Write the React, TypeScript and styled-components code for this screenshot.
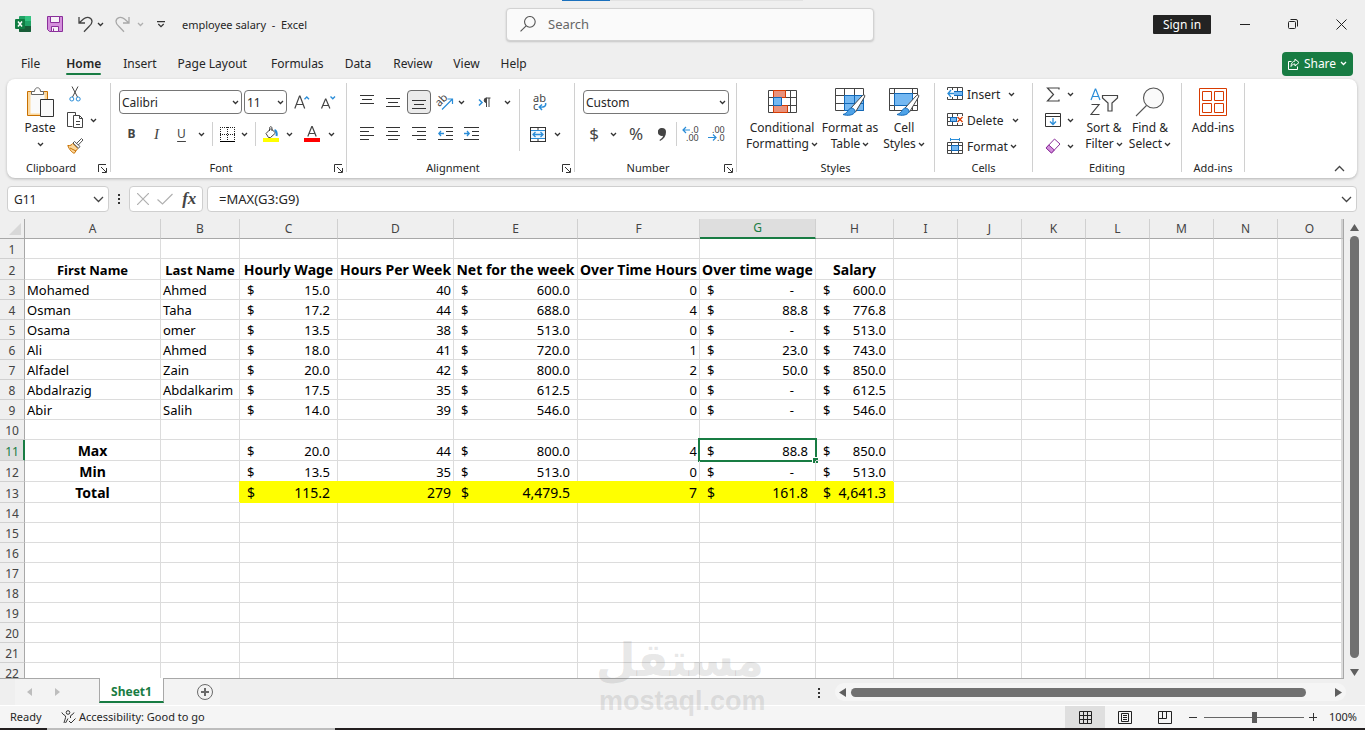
import React from 'react';
import styled, { createGlobalStyle, css } from 'styled-components';

const C = {
  bg: '#efefef',
  ink: '#262626',
  icon: '#444444',
  line: '#d0d0d0',
  grid: '#dcdcdc',
  edge: '#a8a8a8',
  selected: '#dedede',
  green: '#187c43',
  blue: '#2a8dd8',
  orange: '#d83b01',
  thumb: '#717171',
};

const Global = createGlobalStyle`
  *, *::before, *::after { box-sizing: border-box; }
  body { margin: 0; background: ${C.bg}; }
  body, button, input, select { font-family: "Noto Sans", "Open Sans", sans-serif; font-size: 12px; color: ${C.ink}; }
  button { border: 0; padding: 0; background: none; cursor: default; line-height: 16px; }
  svg { display: block; flex: none; }
`;

const Window = styled.div`
  position: relative;
  display: flex;
  flex-direction: column;
  height: 100vh;
  overflow: hidden;
  background: ${C.bg};
`;

/* ---------- title bar ---------- */
const TitleBar = styled.header`
  display: flex;
  align-items: center;
  height: 48px;
  padding-left: 15px;
`;
const TitleSide = styled.div<{ $end?: boolean }>`
  flex: 1 1 0;
  display: flex;
  align-items: center;
  justify-content: ${(p) => (p.$end ? 'flex-end' : 'flex-start')};
  white-space: nowrap;
`;
const QuickButton = styled.button<{ $w: number }>`
  display: flex;
  align-items: center;
  justify-content: center;
  width: ${(p) => p.$w}px;
  height: 24px;
`;
const DocTitle = styled.h1`
  margin: 2px 0 0 4px;
  font-size: 11px;
  font-weight: 400;
  line-height: 16px;
  white-space: pre;
`;
const SearchBox = styled.label`
  display: flex;
  align-items: center;
  gap: 12px;
  width: 368px;
  height: 33px;
  padding-left: 13px;
  border: 1px solid #d2d2d2;
  border-radius: 4px;
  background: #fafafa;
  box-shadow: 0 1px 2px rgba(0, 0, 0, 0.18);
`;
const BareInput = styled.input<{ $s?: number }>`
  flex: 1;
  min-width: 0;
  height: 20px;
  padding: 0;
  border: 0;
  outline: 0;
  background: none;
  font-size: ${(p) => p.$s ?? 12}px;
  &::placeholder { color: #666; opacity: 1; }
`;
const SignIn = styled.button`
  height: 19px;
  width: 58px;
  margin-right: 10px;
  padding-top: 1px;
  border-radius: 1px;
  background: #232323;
  color: #fff;
`;
const Accent = styled.div`
  position: absolute;
  top: 0;
  left: 562px;
  width: 241px;
  height: 1px;
  background: linear-gradient(90deg, #1a70bd 48px, #e2e2e2 48px);
`;

/* ---------- ribbon tabs ---------- */
const TabBar = styled.nav`
  display: flex;
  align-items: center;
  height: 31px;
  padding: 0 12px 0 11px;
`;
const TabLink = styled.a<{ $active?: boolean; $gap?: number }>`
  position: relative;
  margin-right: ${(p) => p.$gap ?? 1}px;
  padding: 0 10px;
  line-height: 22px;
  color: ${C.ink};
  text-decoration: none;
  ${(p) =>
    p.$active &&
    css`
      font-weight: 600;
      &::after {
        content: '';
        position: absolute;
        left: 10px;
        right: 10px;
        bottom: 0;
        height: 2px;
        border-radius: 1px;
        background: ${C.green};
      }
    `}
`;
const ShareButton = styled.button`
  display: flex;
  align-items: center;
  justify-content: center;
  gap: 4px;
  width: 71px;
  height: 24px;
  margin-left: auto;
  border-radius: 4px;
  background: ${C.green};
  color: #fff;
`;

/* ---------- ribbon ---------- */
const Ribbon = styled.section`
  display: flex;
  align-items: flex-start;
  margin: 0 8px 0 7px;
  padding: 4px 0 2px;
  border-radius: 8px;
  background: #fff;
  box-shadow: 0 1px 3px rgba(0, 0, 0, 0.25);
`;
const GroupBox = styled.div<{ $w: number }>`
  flex: none;
  width: ${(p) => p.$w}px;
`;
const GroupBody = styled.div<{ $pad?: number }>`
  display: flex;
  height: 77px;
  padding-left: ${(p) => p.$pad ?? 0}px;
`;
const GroupFoot = styled.div`
  display: flex;
  align-items: center;
  height: 16px;
  line-height: 16px;
  font-size: 11px;
`;
const GroupName = styled.span`
  flex: 1;
  text-align: center;
`;
const Launcher = styled.button`
  display: flex;
  justify-content: center;
  width: 15px;
`;
const Rule = styled.div<{ $h: number; $top?: number; $mx?: number }>`
  flex: none;
  width: 1px;
  height: ${(p) => p.$h}px;
  margin: ${(p) => p.$top ?? 0}px ${(p) => p.$mx ?? 0}px 0;
  background: ${C.line};
`;
const Stack = styled.div<{ $top?: number; $gap?: number }>`
  display: flex;
  flex-direction: column;
  gap: ${(p) => p.$gap ?? 8}px;
  padding-top: ${(p) => p.$top ?? 7}px;
`;
const Line = styled.div<{ $gap?: number; $pad?: number }>`
  display: flex;
  align-items: center;
  gap: ${(p) => p.$gap ?? 0}px;
  padding-left: ${(p) => p.$pad ?? 0}px;
`;
const Tool = styled.button<{ $w?: number; $h?: number; $on?: boolean }>`
  display: flex;
  align-items: center;
  justify-content: center;
  width: ${(p) => p.$w ?? 26}px;
  height: ${(p) => p.$h ?? 24}px;
  ${(p) =>
    p.$on &&
    css`
      width: 24px;
      margin: 0 1px;
      border: 1px solid #6a6a6a;
      border-radius: 4px;
      background: #ebebeb;
    `}
`;
const Letter = styled.span<{ $kind: 'b' | 'i' | 'u' }>`
  font-size: 12px;
  line-height: 16px;
  color: ${C.icon};
  ${(p) => p.$kind === 'b' && 'font-weight: 700;'}
  ${(p) => p.$kind === 'i' && 'font-family: "Liberation Serif", serif; font-style: italic; font-size: 15px;'}
  ${(p) => p.$kind === 'u' && 'text-decoration: underline; text-underline-offset: 3px;'}
`;
const Big = styled.button<{ $w: number }>`
  display: flex;
  flex-direction: column;
  align-items: center;
  align-self: flex-start;
  width: ${(p) => p.$w}px;
  white-space: nowrap;
`;
const BigIcon = styled.span`
  display: flex;
  align-items: center;
  height: 37px;
`;
const WithArrow = styled.span`
  display: flex;
  align-items: center;
  gap: 2px;
  height: 16px;
`;
const Row = styled.button<{ $gap?: number }>`
  display: flex;
  align-items: center;
  height: 22px;
  white-space: nowrap;
  & > span { padding-top: 2px; margin: 0 ${(p) => p.$gap ?? 2}px 0 3px; }
`;
const SelectWrap = styled.span<{ $w: number }>`
  position: relative;
  display: block;
  width: ${(p) => p.$w}px;
  height: 24px;
  & > svg { position: absolute; right: 3px; top: 10px; pointer-events: none; }
`;
const Select = styled.select`
  appearance: none;
  width: 100%;
  height: 24px;
  padding: 0 2px;
  border: 1px solid #767676;
  border-radius: 4px;
  background: #fff;
`;
const Collapse = styled.button`
  align-self: flex-end;
  margin: 0 12px 4px auto;
`;

/* ---------- formula bar ---------- */
const FormulaBar = styled.div`
  display: flex;
  align-items: center;
  height: 26px;
  margin: 8px 8px 7px 7px;
`;
const Field = styled.div<{ $w?: number }>`
  display: flex;
  align-items: center;
  ${(p) => (p.$w ? `width: ${p.$w}px;` : 'flex: 1;')}
  height: 26px;
  padding: 0 4px 0 6px;
  border: 1px solid #cfcfcf;
  border-radius: 4px;
  background: #fff;
`;
const FormulaField = styled(Field)`
  margin-left: 4px;
  padding-left: 11px;
`;
const FxMark = styled.span`
  font-family: "Liberation Serif", serif;
  font-style: italic;
  font-weight: 700;
  font-size: 17px;
  color: #444;
`;
const Dots = styled.span<{ $top?: number }>`
  display: flex;
  justify-content: center;
  width: 20px;
  padding-top: ${(p) => p.$top ?? 0}px;
`;

/* ---------- sheet ---------- */
const Work = styled.main`
  flex: 1;
  min-height: 0;
  display: flex;
`;
const SheetArea = styled.div`
  flex: 1;
  min-width: 0;
  overflow: hidden;
  border-right: 1px solid ${C.edge};
  border-bottom: 1px solid ${C.edge};
`;
const Table = styled.table`
  width: 100%;
  table-layout: fixed;
  border-collapse: separate;
  border-spacing: 0;
  background: #fff;
  font-size: 13px;
  line-height: 18px;
  color: #000;
`;
const ColHead = styled.th<{ $on?: boolean }>`
  height: 20px;
  padding: 0;
  border-right: 1px solid ${C.line};
  border-bottom: ${(p) => (p.$on ? `2px solid ${C.green}` : `1px solid ${C.edge}`)};
  background: ${(p) => (p.$on ? C.selected : C.bg)};
  font-size: 12px;
  font-weight: 400;
  color: ${(p) => (p.$on ? C.green : C.icon)};
`;
const Corner = styled(ColHead)`
  border-right-color: ${C.edge};
  & > svg { margin: 0 3px 0 auto; }
`;
const RowHead = styled.th<{ $on?: boolean; $h: number }>`
  height: ${(p) => p.$h}px;
  padding: 2px 0 0;
  border-right: 1px solid ${(p) => (p.$on ? C.green : C.edge)};
  border-bottom: 1px solid ${C.line};
  background: ${(p) => (p.$on ? C.selected : C.bg)};
  ${(p) => p.$on && `box-shadow: inset -1px 0 0 ${C.green};`}
  font-size: 12px;
  line-height: 17px;
  font-weight: 400;
  color: ${(p) => (p.$on ? C.green : C.icon)};
`;
const Cell = styled.td<{ $align?: string; $bold?: boolean; $fill?: boolean; $big?: boolean }>`
  position: relative;
  padding: ${(p) => (p.$big ? '0 2px' : '2px 2px 0')};
  border-right: 1px solid ${C.grid};
  border-bottom: 1px solid ${C.grid};
  font-size: ${(p) => (p.$big ? 14 : 13)}px;
  line-height: 17px;
  white-space: nowrap;
  text-align: ${(p) => p.$align ?? 'left'};
  font-weight: ${(p) => (p.$bold ? 700 : 400)};
  ${(p) => p.$fill && 'background: #ff0; border-color: #ff0; box-shadow: -1px -1px 0 #ff0;'}
`;
const Money = styled.span<{ $dash?: boolean }>`
  display: flex;
  justify-content: space-between;
  padding: 0 ${(p) => (p.$dash ? 19 : 5)}px 0 5px;
`;
const Cursor = styled.span`
  position: absolute;
  inset: -2px;
  border: 2px solid ${C.green};
  &::after {
    content: '';
    position: absolute;
    right: -3px;
    bottom: -3px;
    width: 5px;
    height: 5px;
    background: ${C.green};
    box-shadow: -1px -1px 0 #fff;
  }
`;
const VScroll = styled.div`
  flex: none;
  display: flex;
  flex-direction: column;
  align-items: center;
  gap: 4px;
  width: 21px;
  padding: 4px 0 2px;
`;
const VThumb = styled.div`
  flex: 1;
  width: 9px;
  margin-bottom: 6px;
  border-radius: 5px;
  background: ${C.thumb};
`;

/* ---------- sheet tabs and status ---------- */
const SheetBar = styled.div`
  display: flex;
  align-items: flex-start;
  height: 27px;
  padding-right: 19px;
  border-bottom: 1px solid #fff;
`;
const TabStrip = styled.div`
  display: flex;
  align-items: center;
  width: 205px;
  height: 26px;
  margin-left: 15px;
  background: #f3f3f3;
`;
const SheetTab = styled.button`
  align-self: flex-start;
  width: 65px;
  height: 25px;
  margin: -1px 28px 0 28px;
  padding-top: 4px;
  border: solid ${C.edge};
  border-width: 0 1px;
  border-bottom: 2px solid ${C.green};
  background: #fff;
  color: ${C.green};
  font-weight: 700;
`;
const HScroll = styled.div`
  flex: 0 0 38%;
  display: flex;
  align-items: center;
  gap: 5px;
  height: 18px;
  margin: 4px 0 0 6px;
  padding: 0 4px;
  border-radius: 9px;
  background: #f5f5f5;
`;
const HTrack = styled.div`
  flex: 1;
  height: 9px;
`;
const HThumb = styled.div`
  width: 95%;
  height: 9px;
  border-radius: 5px;
  background: ${C.thumb};
`;
const Status = styled.footer`
  display: flex;
  align-items: center;
  height: 22px;
  padding: 0 8px 0 10px;
  background: #f5f5f5;
  font-size: 11px;
  line-height: 16px;
`;
const Ready = styled.span`
  width: 51px;
`;
const Access = styled.span`
  margin-left: 3px;
`;
const Percent = styled.output`
  width: 40px;
  text-align: right;
`;
const ViewButton = styled.button<{ $on?: boolean }>`
  display: flex;
  align-items: center;
  justify-content: center;
  width: 40px;
  height: 22px;
  background: ${(p) => (p.$on ? '#dfdfdf' : 'none')};
`;
const Zoom = styled.input`
  appearance: none;
  width: 100px;
  height: 12px;
  margin: 0 5px 0 3px;
  background: linear-gradient(#666, #666) center / 100% 1px no-repeat;
  &::-webkit-slider-thumb {
    appearance: none;
    width: 5px;
    height: 11px;
    background: #5c5c5c;
  }
`;
const Taskbar = styled.div`
  flex: none;
  height: 2px;
  background: linear-gradient(90deg, #231f20 47px, #bdbdbd 47px 335px, #231f20 335px);
`;
const Spacer = styled.div`
  flex: 1;
`;
const Watermark = styled.div`
  position: absolute;
  left: 599px;
  bottom: 14px;
  width: 165px;
  text-align: center;
  color: rgba(110, 110, 110, 0.17);
  font-weight: 700;
  pointer-events: none;
  white-space: nowrap;
`;
const WmArabic = styled.div`
  font-family: "DejaVu Sans", sans-serif;
  font-size: 46px;
  line-height: 52px;
`;
const WmLatin = styled.div`
  font-family: "Liberation Sans", sans-serif;
  font-size: 27px;
  line-height: 30px;
`;

/* ---------- icons ---------- */
type IconProps = { w: number; h: number; children: React.ReactNode; stroke?: string; sw?: number };
const Svg = ({ w, h, children, stroke = C.icon, sw = 1 }: IconProps) => (
  <svg width={w} height={h} viewBox={`0 0 ${w} ${h}`} fill="none" stroke={stroke} strokeWidth={sw} aria-hidden="true">
    {children}
  </svg>
);
const Chev = ({ c = '#333' }: { c?: string }) => (
  <Svg w={7} h={5} stroke={c} sw={1.3}><path d="M1 1l2.5 2.5L6 1" /></Svg>
);
const WideChev = ({ up }: { up?: boolean }) => (
  <Svg w={11} h={7} sw={1.3}><path d={up ? 'M1 6l4.5-4.5L10 6' : 'M1 1l4.5 4.5L10 1'} /></Svg>
);
const ExcelLogo = () => (
  <Svg w={17} h={16} stroke="none">
    <rect x="4" y="0" width="12" height="16" rx="1" fill="#21a366" />
    <path d="M10 0h5a1 1 0 011 1v4h-6z" fill="#33c481" />
    <path d="M4 5h6v5H4z" fill="#107c41" />
    <path d="M10 5h6v5h-6z" fill="#21a366" />
    <path d="M4 10h12v5a1 1 0 01-1 1H5a1 1 0 01-1-1z" fill="#185c37" />
    <rect x="0" y="3" width="10" height="10" rx="1" fill="#107c41" />
    <path d="M3 5.500l4 5M7 5.500l-4 5" stroke="#fff" strokeWidth="1.5" />
  </Svg>
);
const Save = () => (
  <Svg w={16} h={16} stroke="#8a2f9a">
    <path d="M.5.5h15v15h-13l-2-2z" fill="#d48fdc" />
    <path d="M3.500.5h9v6h-9z" fill="#f7f2f8" />
    <path d="M4.500 10.500h7v5h-7z" fill="#f7f2f8" />
    <path d="M6.500 12.500v3" />
  </Svg>
);
const Undo = ({ flip, c = C.icon }: { flip?: boolean; c?: string }) => (
  <Svg w={15} h={17} stroke={c} sw={1.3}>
    <g transform={flip ? 'translate(15 0) scale(-1 1)' : undefined}>
      <path d="M1 1v6h6M1.300 6.700L5.500 3C9-.2 14 1.500 14 5.500c0 2.300-1.500 3.800-3 5L6 15.800" />
    </g>
  </Svg>
);
const Customize = () => (
  <Svg w={8} h={7} sw={1.2} stroke="#333"><path d="M0 .6h8M1.300 3L4 5.700 6.700 3" /></Svg>
);
const Magnifier = ({ s }: { s: number }) => (
  <svg width={s} height={s} viewBox="0 0 30 30" fill="none" stroke="#555" strokeWidth={(30 / s) * 1.1} aria-hidden="true">
    <circle cx="18.500" cy="11" r="10" fill="#fafafa" />
    <path d="M11.500 18.500L1 29" />
  </svg>
);
const PasteIcon = () => (
  <Svg w={28} h={30}>
    <path d="M1.500 4.500h20v24h-20z" fill="#fbd79c" stroke="#c87000" />
    <path d="M4.500 7.500h14v19h-14z" fill="#fafafa" stroke="none" />
    <path d="M5.500 7.500v-3h3c0-5 6-5 6 0h3v3z" fill="#fff" stroke="#666" />
    <path d="M14.500 12.500h13v17h-13z" fill="#fafafa" stroke="#333" />
  </Svg>
);
const Cut = () => (
  <Svg w={12} h={16}>
    <path d="M3 .5l5.500 10.500M9 .5L3.500 11" />
    <circle cx="2.800" cy="13" r="2" stroke={C.blue} /><circle cx="9.200" cy="13" r="2" stroke={C.blue} />
  </Svg>
);
const Copy = () => (
  <Svg w={17} h={16}>
    <path d="M5.500 14.500h-5V.5h8v3" />
    <path d="M6.500 3.500h6l3 3v9h-9zM12.500 3.500v3h3M9 9.500h4M9 12.500h4" />
  </Svg>
);
const Painter = () => (
  <Svg w={17} h={16}>
    <path d="M.8 7.500c3 .5 4-1 5-2l5 5c-1 1.500-2.500 3-3.500 4.800-2-.5-5-3.500-6.500-7.800z" fill="#fbd79c" stroke="#c87000" />
    <path d="M3 10l6 3" stroke="#c87000" />
    <path d="M6 5l1.500-1.500 5.500 5-1.500 1.700zM9.500 5.500l5-5 1.500 1.500-4.700 5" fill="#fff" stroke="#555" />
  </Svg>
);
const LaunchIcon = () => (
  <Svg w={9} h={9} stroke="#333"><path d="M.5 8V.5H8M3 3l5 5M8.500 4v4.500H4" /></Svg>
);
const GrowA = ({ small }: { small?: boolean }) => (
  <Svg w={16} h={14} sw={1.2}>
    <path d={small ? 'M1.500 13.500L5.500 4h.4l4 9.500M3 10.500h5.500' : 'M.8 13.500L5.500 1h.5l4.700 12.500M2.500 9.500H9'} />
    <path d={small ? 'M10.500 1.500l2.300 2.300L15 1.500' : 'M10.500 4.300L12.800 2 15 4.300'} stroke={C.blue} strokeWidth="1.300" />
  </Svg>
);
const Borders = () => (
  <Svg w={15} h={15} stroke="#222">
    <path d="M.5 0v14M7.500 0v14M14.500 0v14M0 .5h15M0 7.500h15" strokeDasharray="1 1" />
    <path d="M0 14.500h15" stroke="#000" />
  </Svg>
);
const Fill = () => (
  <Svg w={16} h={16}>
    <path d="M3 7.500l5-5 4.500 4.500-5 4.500H5.500zM6.500 5V2.500c0-2.500 2.500-2.500 2.500 0V5" />
    <path d="M11.500 4c2.500 1 2.500 3 2 6" stroke={C.blue} strokeWidth="2" />
    <path d="M0 12h16v4H0z" fill="#ff0" stroke="none" />
  </Svg>
);
const FontColor = () => (
  <Svg w={16} h={16}>
    <path d="M3.800 10.500L7.800.5h.4l4 10M5.300 7.500h5.400" strokeWidth="1.200" />
    <path d="M0 12h16v4H0z" fill="#f00" stroke="none" />
  </Svg>
);
const Bars = ({ rows }: { rows: [number, number, number][] }) => (
  <Svg w={15} h={14} stroke="#333">
    {rows.map(([x1, x2, y]) => <path key={y} d={`M${x1} ${y}.5H${x2}`} />)}
  </Svg>
);
const Indent = ({ out }: { out?: boolean }) => (
  <Svg w={15} h={14} stroke="#333">
    <path d="M0 .5h15M8 4.500h7M8 8.500h7M0 12.500h15" />
    <path d={out ? 'M6 6.500H.8M3 4L.8 6.500 3 9' : 'M0 6.500h5.200M3 4l2.200 2.500L3 9'} stroke={C.blue} strokeWidth="1.300" />
  </Svg>
);
const SvgWord = styled.text<{ $s: number }>`
  font-family: "Noto Sans", sans-serif;
  font-size: ${(p) => p.$s}px;
  fill: ${C.icon};
  stroke: none;
`;
const Orient = () => (
  <Svg w={20} h={22}>
    <SvgWord $s={11} x="2" y="13" transform="rotate(-45 7 12)">ab</SvgWord>
    <path d="M7 18.500L17 8.500M12.500 8H17.500V13" stroke={C.blue} strokeWidth="1.200" />
  </Svg>
);
const Rtl = () => (
  <Svg w={13} h={11}>
    <path d="M1 2.500l3 3-3 3" stroke={C.blue} strokeWidth="1.500" />
    <path d="M8.500 1v9M11 1v9M12.500 1H8" />
    <path d="M8.500 1a2.300 2.300 0 000 4.600z" fill={C.icon} />
  </Svg>
);
const Wrap = () => (
  <Svg w={15} h={22}>
    <SvgWord $s={11} x="1" y="11">ab</SvgWord>
    <SvgWord $s={11} x="1" y="19">c</SvgWord>
    <path d="M13.500 12c1 3.500-2 4.500-6 4M10 13.500L7.300 16l2.700 3" stroke={C.blue} strokeWidth="1.500" />
  </Svg>
);
const Merge = () => (
  <Svg w={16} h={15} stroke="#333">
    <path d="M.5.5h15v14H.5zM8 .5v3M8 11.500v3" />
    <path d="M.5 3.500h15v8H.5z" fill="#eef6fd" stroke={C.blue} />
    <path d="M3 7.500h10M5.500 5L3 7.500 5.500 10M10.500 5L13 7.500 10.500 10" stroke={C.blue} strokeWidth="1.300" />
    <path d="M.5 0v15M15.500 0v15" />
  </Svg>
);
const Glyph = styled.span<{ $s: number }>`
  font-size: ${(p) => p.$s}px;
  line-height: 24px;
  color: ${C.icon};
`;
const Decimals = ({ more }: { more?: boolean }) => (
  <Svg w={18} h={22}>
    <SvgWord $s={9} x={more ? 9 : 4} y="10">{more ? '.0' : '.00'}</SvgWord>
    <SvgWord $s={9} x={more ? 4 : 9} y="18">{more ? '.00' : '.0'}</SvgWord>
    <path d={more ? 'M8 7H1M4 4L1 7l3 3' : 'M0 14.500h8M5 11.500l3 3-3 3'} stroke={C.blue} strokeWidth="1.200" />
  </Svg>
);
const CondFormat = () => (
  <Svg w={29} h={23} stroke="#444">
    <path d="M.5.500h28v22H.5zM.5 7.500h28M.5 15.500h28M5.500 .5v22M22.500 .5v22" fill="#fff" />
    <path d="M5.500.5h12v7h-12zM5.500 15.500h14v7h-14z" fill="#e8927c" stroke={C.orange} />
    <path d="M5.500 7.500h8v8h-8z" fill="#74b8f2" stroke="#1168b8" />
  </Svg>
);
const Brush = () => (
  <>
    <path d="M16 20L27 8c2-2 3.500-1 2.500 1L20.500 24z" fill="#fff" stroke="#444" />
    <path d="M8 26.500c4 1.500 11 1 12-3 .5-2-3-4.500-5-3-2.500 1.500-2 4.500-7 6z" fill="#4fa3e8" stroke="#1168b8" />
  </>
);
const FormatTable = () => (
  <Svg w={31} h={28}>
    <path d="M.5.500h28v22H.5zM.5 7.500h28M.5 15.500h28M9.500 .5v22M19.500 .5v22" fill="#fff" stroke="#444" />
    <path d="M9.500 7.500h19v15h-19z" fill="#74b8f2" stroke="#1168b8" />
    <path d="M19.500 8v14M10 15.500h18" stroke="#1168b8" />
    <Brush />
  </Svg>
);
const CellStyles = () => (
  <Svg w={31} h={28}>
    <path d="M.5.500h28v22H.5zM.5 5.500h28M.5 17.500h28M5.500 .5v22M23.500 .5v22" fill="#fff" stroke="#444" />
    <path d="M5.500 5.500h18v12h-18z" fill="#74b8f2" stroke="#1168b8" />
    <Brush />
  </Svg>
);
const CellIcon = ({ kind }: { kind: 'insert' | 'delete' | 'format' }) => (
  <Svg w={17} h={16} stroke="#444">
    {kind === 'format' ? (
      <>
        <path d="M.5 4.500h15v11H.5zM.5 7.500h15M.5 12.500h15M4.500 4v11M11.500 4v11" />
        <path d="M4.500 7.500h7v5h-7z" fill="#74b8f2" stroke="#1168b8" />
        <path d="M3 1.500h10M3.500 0v3M12.500 0v3" stroke={C.blue} />
      </>
    ) : (
      <>
        <path d="M.5 1.500h15v12H.5zM.5 5.500h15M.5 9.500h15M5.500 1.500v12M10.500 1.500v12" />
        <path d={kind === 'insert' ? 'M5.500 5.500h10v4h-10z' : 'M3.500 5.500h6v4h-6z'} fill="#74b8f2" stroke="#1168b8" />
        {kind === 'insert' ? (
          <><path d="M0 4h7v7H0z" fill="#fff" stroke="none" /><path d="M7 7.500H1M4 4L1 7.500 4 11" stroke={C.blue} strokeWidth="1.300" /></>
        ) : (
          <><path d="M10 4h7v7h-7z" fill="#fff" stroke="none" /><path d="M10.500 5l5 5M15.500 5l-5 5" stroke={C.orange} strokeWidth="1.300" /></>
        )}
      </>
    )}
  </Svg>
);
const Sigma = () => (
  <Svg w={14} h={15} sw={1.2}><path d="M13 2.500V1H1.500l6 6.500-6 6.500H13v-1.500" /></Svg>
);
const FillDown = () => (
  <Svg w={16} h={14} stroke="#333">
    <path d="M.5.5h15v13H.5zM.5 3.500h15" />
    <path d="M8 5v6.500M5 8.500l3 3 3-3" stroke={C.blue} strokeWidth="1.300" />
  </Svg>
);
const Eraser = () => (
  <Svg w={16} h={16} stroke="#8a2f9a">
    <path d="M1 10L9.500 1l5.500 5-8.500 9z" fill="#fff" />
    <path d="M1 10l2.800-3 5.500 5-2.800 3z" fill="#d48fdc" />
  </Svg>
);
const SortFilter = () => (
  <Svg w={29} h={28} sw={1.2}>
    <path d="M1 12L5.300 1h.4L10 12M2.500 8.500h6" stroke={C.blue} />
    <path d="M1.500 16.500h7.500L1 26.500h8.500" />
    <path d="M12.500 7.500h15v2.500l-5.500 5v8h-4v-8l-5.500-5z" fill="#fafafa" />
  </Svg>
);
const AddIns = () => (
  <Svg w={28} h={28} stroke={C.orange}>
    <path d="M.5.5h27v27H.5zM3.500 3.500h9v9h-9zM15.500 3.500h9v9h-9zM3.500 15.500h9v9h-9zM15.500 15.500h9v9h-9z" />
  </Svg>
);
const ShareIcon = () => (
  <Svg w={12} h={12} stroke="#fff">
    <path d="M3.500 3.500h-3v8h9v-3M7 1l4 3.500L7 8V6C5 6 4 7 3 8.500 3 5 5 3.200 7 3z" />
  </Svg>
);
const Tri = ({ d, c = '#5f5f5f', w = 9, h = 9 }: { d: string; c?: string; w?: number; h?: number }) => (
  <Svg w={w} h={h} stroke="none"><path d={d} fill={c} /></Svg>
);
const VDots = () => (
  <Svg w={2} h={10} stroke="none"><path d="M0 0h2v2H0zM0 4h2v2H0zM0 8h2v2H0z" fill="#333" /></Svg>
);

/* ---------- data ---------- */
const COLS: [string, number][] = [
  ['A', 136], ['B', 79], ['C', 98], ['D', 116], ['E', 124], ['F', 122], ['G', 116], ['H', 78],
  ['I', 64], ['J', 64], ['K', 64], ['L', 64], ['M', 64], ['N', 64], ['O', 64],
];
const ROWS: Record<number, string[]> = {
  2: ['First Name', 'Last Name', 'Hourly Wage', 'Hours Per Week', 'Net for the week', 'Over Time Hours', 'Over time wage', 'Salary'],
  3: ['Mohamed', 'Ahmed', '15.0', '40', '600.0', '0', '-', '600.0'],
  4: ['Osman', 'Taha', '17.2', '44', '688.0', '4', '88.8', '776.8'],
  5: ['Osama', 'omer', '13.5', '38', '513.0', '0', '-', '513.0'],
  6: ['Ali', 'Ahmed', '18.0', '41', '720.0', '1', '23.0', '743.0'],
  7: ['Alfadel', 'Zain', '20.0', '42', '800.0', '2', '50.0', '850.0'],
  8: ['Abdalrazig', 'Abdalkarim', '17.5', '35', '612.5', '0', '-', '612.5'],
  9: ['Abir', 'Salih', '14.0', '39', '546.0', '0', '-', '546.0'],
  11: ['Max', '', '20.0', '44', '800.0', '4', '88.8', '850.0'],
  12: ['Min', '', '13.5', '35', '513.0', '0', '-', '513.0'],
  13: ['Total', '', '115.2', '279', '4,479.5', '7', '161.8', '4,641.3'],
};
const MONEY = [2, 4, 6, 7];
const TALL = [2, 11, 12, 13];

const SheetRow = ({ n }: { n: number }) => {
  const data = ROWS[n] ?? [];
  return (
    <tr>
      <RowHead scope="row" $h={TALL.includes(n) ? 21 : 20} $on={n === 11}>{n}</RowHead>
      {COLS.map(([name], i) => {
        const v = data[i] ?? '';
        const head = n === 2 || (n > 10 && i === 0);
        const big = (n === 2 && i > 1) || (n > 10 && i === 0) || n === 13;
        const money = v !== '' && n > 2 && MONEY.includes(i);
        const align = head ? 'center' : i === 3 || i === 5 ? 'right' : 'left';
        return (
          <Cell key={name} $align={align} $bold={head} $big={big} $fill={n === 13 && i > 1 && i < 8}>
            {money ? <Money $dash={v === '-'}><span>$</span><span>{v}</span></Money> : v}
            {n === 11 && name === 'G' && <Cursor />}
          </Cell>
        );
      })}
      <Cell />
    </tr>
  );
};

const Group = ({ name, w, pad, launch, children }: { name: string; w: number; pad?: number; launch?: boolean; children: React.ReactNode }) => (
  <>
    <GroupBox $w={w - 1} role="group" aria-label={name}>
      <GroupBody $pad={pad}>{children}</GroupBody>
      <GroupFoot>
        <GroupName>{name}</GroupName>
        {launch && <Launcher aria-label={`${name} settings`}><LaunchIcon /></Launcher>}
      </GroupFoot>
    </GroupBox>
    <Rule $h={89} />
  </>
);
const Arrow = ({ w = 14, h, label }: { w?: number; h?: number; label: string }) => (
  <Tool $w={w} $h={h} aria-label={label}><Chev /></Tool>
);
const Combo = ({ w, value, label }: { w: number; value: string; label: string }) => (
  <SelectWrap $w={w}>
    <Select aria-label={label} defaultValue={value}><option>{value}</option></Select>
    <Chev />
  </SelectWrap>
);

export default function App() {
  return (
    <>
      <Global />
      <Window>
        <Accent />
        <TitleBar>
          <TitleSide>
            <ExcelLogo />
            <QuickButton $w={46} aria-label="Save"><Save /></QuickButton>
            <QuickButton $w={14} aria-label="Undo"><Undo /></QuickButton>
            <QuickButton $w={17} aria-label="Undo history"><Chev /></QuickButton>
            <QuickButton $w={27} aria-label="Redo"><Undo flip c="#a8a8a8" /></QuickButton>
            <QuickButton $w={8} aria-label="Redo history"><Chev c="#b0b0b0" /></QuickButton>
            <QuickButton $w={34} aria-label="Customize toolbar"><Customize /></QuickButton>
            <DocTitle>{'employee salary  -  Excel'}</DocTitle>
          </TitleSide>
          <SearchBox>
            <Magnifier s={16} />
            <BareInput $s={13} placeholder="Search" aria-label="Search" />
          </SearchBox>
          <TitleSide $end>
            <SignIn>Sign in</SignIn>
            <QuickButton $w={48} aria-label="Minimize"><Svg w={10} h={1} stroke="#222"><path d="M0 .5h10" /></Svg></QuickButton>
            <QuickButton $w={48} aria-label="Restore"><Svg w={10} h={10} stroke="#222"><rect x=".5" y="2.500" width="7" height="7" rx="1" /><path d="M2.500.5H8a1.500 1.500 0 011.500 1.500v5.500" /></Svg></QuickButton>
            <QuickButton $w={48} aria-label="Close"><Svg w={11} h={11} stroke="#222"><path d="M.5.5l10 10M10.500.5l-10 10" /></Svg></QuickButton>
          </TitleSide>
        </TitleBar>

        <TabBar>
          <TabLink href="#file" $gap={6}>File</TabLink>
          <TabLink href="#home" $gap={2} $active>Home</TabLink>
          <TabLink href="#insert">Insert</TabLink>
          <TabLink href="#layout" $gap={4}>Page Layout</TabLink>
          <TabLink href="#formulas">Formulas</TabLink>
          <TabLink href="#data" $gap={2}>Data</TabLink>
          <TabLink href="#review">Review</TabLink>
          <TabLink href="#view">View</TabLink>
          <TabLink href="#help">Help</TabLink>
          <ShareButton><ShareIcon />Share<Chev c="#fff" /></ShareButton>
        </TabBar>

        <Ribbon>
          <Group name="Clipboard" w={104} pad={13} launch>
            <Big $w={40}>
              <BigIcon><PasteIcon /></BigIcon>
              <span>Paste</span>
              <WithArrow><Chev /></WithArrow>
            </Big>
            <Stack $top={0} $gap={4}>
              <Tool $w={30} $h={22} aria-label="Cut"><Cut /></Tool>
              <Line>
                <Tool $w={30} $h={22} aria-label="Copy"><Copy /></Tool>
                <Arrow w={7} h={22} label="Copy options" />
              </Line>
              <Tool $w={30} $h={22} aria-label="Format painter"><Painter /></Tool>
            </Stack>
          </Group>

          <Group name="Font" w={236} pad={8} launch>
            <Stack>
              <Line $gap={2}>
                <Combo w={123} value="Calibri" label="Font name" />
                <Combo w={43} value="11" label="Font size" />
                <Line>
                  <Tool aria-label="Increase font size"><GrowA /></Tool>
                  <Tool aria-label="Decrease font size"><GrowA small /></Tool>
                </Line>
              </Line>
              <Line>
                <Tool $w={25} aria-label="Bold"><Letter $kind="b">B</Letter></Tool>
                <Tool $w={25} aria-label="Italic"><Letter $kind="i">I</Letter></Tool>
                <Tool $w={25} aria-label="Underline"><Letter $kind="u">U</Letter></Tool>
                <Arrow label="Underline style" />
                <Rule $h={24} $mx={4} />
                <Tool $w={20} aria-label="Borders"><Borders /></Tool>
                <Arrow label="Border style" />
                <Rule $h={24} $mx={4} />
                <Tool $w={21} aria-label="Fill color"><Fill /></Tool>
                <Arrow w={16} label="Fill colors" />
                <Tool $w={30} aria-label="Font color"><FontColor /></Tool>
                <Arrow w={8} label="Font colors" />
              </Line>
            </Stack>
          </Group>

          <Group name="Alignment" w={228} pad={7} launch>
            <Stack>
              <Line>
                <Tool aria-label="Top align"><Bars rows={[[0, 14, 0], [2, 12, 4], [0, 14, 8]]} /></Tool>
                <Tool aria-label="Middle align"><Bars rows={[[0, 14, 3], [2, 12, 7], [0, 14, 11]]} /></Tool>
                <Tool $on aria-label="Bottom align"><Bars rows={[[0, 14, 5], [2, 12, 9], [0, 14, 13]]} /></Tool>
                <Tool $w={25} aria-label="Orientation"><Orient /></Tool>
                <Arrow w={8} label="Orientation options" />
                <Tool $w={38} aria-label="Text direction"><Rtl /></Tool>
                <Arrow w={8} label="Direction options" />
              </Line>
              <Line>
                <Tool aria-label="Align left"><Bars rows={[[0, 14, 0], [0, 9, 4], [0, 14, 8], [0, 9, 12]]} /></Tool>
                <Tool aria-label="Center"><Bars rows={[[0, 14, 0], [2, 12, 4], [0, 14, 8], [2, 12, 12]]} /></Tool>
                <Tool aria-label="Align right"><Bars rows={[[0, 14, 0], [5, 14, 4], [0, 14, 8], [5, 14, 12]]} /></Tool>
                <Tool aria-label="Decrease indent"><Indent out /></Tool>
                <Tool aria-label="Increase indent"><Indent /></Tool>
              </Line>
            </Stack>
            <Rule $h={62} $top={6} $mx={8} />
            <Stack>
              <Tool $w={22} aria-label="Wrap text"><Wrap /></Tool>
              <Line>
                <Tool $w={20} aria-label="Merge and center"><Merge /></Tool>
                <Arrow w={18} label="Merge options" />
              </Line>
            </Stack>
          </Group>

          <Group name="Number" w={162} pad={8} launch>
            <Stack>
              <Combo w={146} value="Custom" label="Number format" />
              <Line>
                <Tool $w={22} aria-label="Accounting format"><Glyph $s={17}>$</Glyph></Tool>
                <Arrow w={16} label="Currency options" />
                <Tool $w={30} aria-label="Percent"><Glyph $s={17}>%</Glyph></Tool>
                <Tool $w={22} aria-label="Comma style">
                  <Svg w={8} h={13} stroke="none"><path d="M4 0a4 4 0 014 4c0 4-2 7-6 9l-.5-1C4 10.500 5 9 5 7.800A4 4 0 114 0z" fill="#444" /></Svg>
                </Tool>
                <Rule $h={24} $mx={3} />
                <Tool $w={22} aria-label="Increase decimal"><Decimals more /></Tool>
                <Tool $w={30} aria-label="Decrease decimal"><Decimals /></Tool>
              </Line>
            </Stack>
          </Group>

          <Group name="Styles" w={198} pad={6}>
            <Big $w={78}><BigIcon><CondFormat /></BigIcon><span>Conditional</span><WithArrow>Formatting<Chev /></WithArrow></Big>
            <Big $w={58}><BigIcon><FormatTable /></BigIcon><span>Format as</span><WithArrow>Table<Chev /></WithArrow></Big>
            <Big $w={50}><BigIcon><CellStyles /></BigIcon><span>Cell</span><WithArrow>Styles<Chev /></WithArrow></Big>
          </Group>

          <Group name="Cells" w={98} pad={12}>
            <Stack $top={0} $gap={4}>
              <Row $gap={8}><CellIcon kind="insert" /><span>Insert</span><Chev /></Row>
              <Row $gap={8}><CellIcon kind="delete" /><span>Delete</span><Chev /></Row>
              <Row><CellIcon kind="format" /><span>Format</span><Chev /></Row>
            </Stack>
          </Group>

          <Group name="Editing" w={149} pad={10}>
            <Stack $top={0} $gap={4}>
              <Line><Tool $w={20} $h={22} aria-label="AutoSum"><Sigma /></Tool><Arrow h={22} label="Sum options" /></Line>
              <Line><Tool $w={20} $h={22} aria-label="Fill"><FillDown /></Tool><Arrow h={22} label="Fill options" /></Line>
              <Line><Tool $w={20} $h={22} aria-label="Clear"><Eraser /></Tool><Arrow h={22} label="Clear options" /></Line>
            </Stack>
            <Line $pad={4}>
              <Big $w={46}><BigIcon><SortFilter /></BigIcon><span>Sort &amp;</span><WithArrow>Filter<Chev /></WithArrow></Big>
              <Big $w={46}><BigIcon><Magnifier s={30} /></BigIcon><span>Find &amp;</span><WithArrow>Select<Chev /></WithArrow></Big>
            </Line>
          </Group>

          <Group name="Add-ins" w={63}>
            <Big $w={62}><BigIcon><AddIns /></BigIcon><span>Add-ins</span></Big>
          </Group>
          <Collapse aria-label="Collapse ribbon"><WideChev up /></Collapse>
        </Ribbon>

        <FormulaBar>
          <Field $w={102}>
            <BareInput defaultValue="G11" aria-label="Name box" />
            <button aria-label="Names"><WideChev /></button>
          </Field>
          <Dots><VDots /></Dots>
          <Field $w={74}>
            <Tool $w={14} aria-label="Cancel"><Svg w={12} h={12} stroke="#b0b0b0" sw={1.2}><path d="M0 0l12 12M12 0L0 12" /></Svg></Tool>
            <Tool $w={32} aria-label="Enter"><Svg w={16} h={12} stroke="#b0b0b0" sw={1.2}><path d="M.5 6.500L5.500 11 15.500 1" /></Svg></Tool>
            <Tool $w={18} aria-label="Insert function"><FxMark>fx</FxMark></Tool>
          </Field>
          <FormulaField>
            <BareInput $s={13} defaultValue="=MAX(G3:G9)" aria-label="Formula" />
            <button aria-label="Expand formula bar"><WideChev /></button>
          </FormulaField>
        </FormulaBar>

        <Work>
          <SheetArea>
            <Table>
              <colgroup>
                <col width={25} />
                {COLS.map(([name, w]) => <col key={name} width={w} />)}
                <col />
              </colgroup>
              <thead>
                <tr>
                  <Corner aria-label="Select all"><Tri w={12} h={12} d="M12 0v12H0z" c="#d8d8d8" /></Corner>
                  {COLS.map(([name]) => <ColHead key={name} scope="col" $on={name === 'G'}>{name}</ColHead>)}
                  <ColHead />
                </tr>
              </thead>
              <tbody>
                {Array.from({ length: 22 }, (_, i) => <SheetRow key={i} n={i + 1} />)}
              </tbody>
            </Table>
          </SheetArea>
          <VScroll>
            <Tri d="M4.500 1L9 8H0z" />
            <VThumb />
            <Tri d="M0 1h9L4.500 8z" />
          </VScroll>
        </Work>

        <SheetBar>
          <TabStrip>
            <Tool $w={28} aria-label="Previous sheet"><Tri w={5} h={8} d="M5 0v8L0 4z" c="#bdbdbd" /></Tool>
            <Tool $w={28} aria-label="Next sheet"><Tri w={5} h={8} d="M0 0v8l5-4z" c="#bdbdbd" /></Tool>
            <SheetTab>Sheet1</SheetTab>
            <Tool aria-label="New sheet"><Svg w={16} h={16} stroke="#6a6a6a"><circle cx="8" cy="8" r="7.500" /><path d="M4 8h8M8 4v8" strokeWidth="2" /></Svg></Tool>
          </TabStrip>
          <Spacer />
          <Dots $top={9}><VDots /></Dots>
          <HScroll>
            <Tri w={7} h={9} d="M7 0v9L0 4.500z" />
            <HTrack><HThumb /></HTrack>
            <Tri w={7} h={9} d="M0 0v9l7-4.500z" />
          </HScroll>
        </SheetBar>

        <Status>
          <Ready>Ready</Ready>
          <Svg w={15} h={14} stroke="#333">
            <circle cx="7" cy="2.500" r="1.800" />
            <path d="M.8 2.500C2 5 4 5 4.500 6c.5 2-1 4-1.500 7M13 2.500C12 5 10 4.500 9.500 6v2M4.500 13L7 8.500M8 11l2 2 4.500-4.500" />
          </Svg>
          <Access>Accessibility: Good to go</Access>
          <Spacer />
          <ViewButton $on aria-label="Normal view"><Svg w={13} h={13} stroke="#222"><path d="M.5.5h12v12H.5zM.5 4.500h12M.5 8.500h12M4.500.5v12M8.500.5v12" /></Svg></ViewButton>
          <ViewButton aria-label="Page layout view"><Svg w={14} h={13} stroke="#222"><path d="M.5.5h13v12H.5zM3.500 2.500h7v8h-7zM5 4.500h4M5 6.500h4M5 8.500h4" /></Svg></ViewButton>
          <ViewButton aria-label="Page break view"><Svg w={14} h={13} stroke="#222"><path d="M.5.5h13v12H.5zM4.500.5v7M.5 7.500h8M8.500.5v7" /></Svg></ViewButton>
          <Tool $w={16} $h={22} aria-label="Zoom out"><Svg w={8} h={1} stroke="#333"><path d="M0 .5h8" /></Svg></Tool>
          <Zoom type="range" min={0} max={100} defaultValue={50} aria-label="Zoom" />
          <Tool $w={8} $h={22} aria-label="Zoom in"><Svg w={8} h={8} stroke="#333"><path d="M0 4.500h8M4.500 0v8" /></Svg></Tool>
          <Percent>100%</Percent>
        </Status>
        <Taskbar />

        <Watermark>
          <WmArabic lang="ar" dir="rtl">مستقل</WmArabic>
          <WmLatin>mostaql.com</WmLatin>
        </Watermark>
      </Window>
    </>
  );
}
